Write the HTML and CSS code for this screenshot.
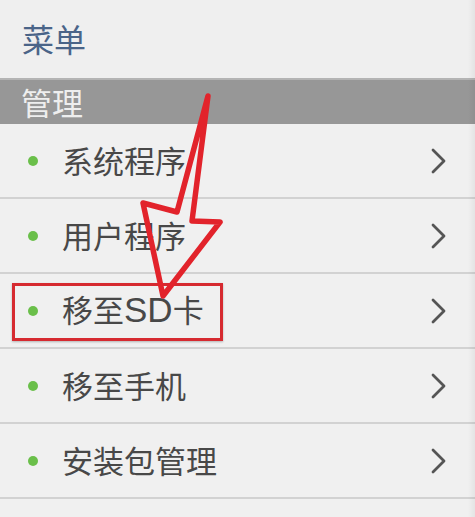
FILE: index.html
```html
<!DOCTYPE html>
<html lang="zh-CN">
<head>
<meta charset="utf-8">
<title>菜单</title>
<link rel="stylesheet" href="styles.css">
</head>
<body>
<div class="page">
  <div class="title">菜单</div>
  <div class="section">管理</div>
  <ul class="list">
    <li class="item"><span class="dot"></span><span class="label">系统程序</span><svg class="chev" viewBox="0 0 16 26"><path d="M2 2 L13 13 L2 24"/></svg></li>
    <li class="item"><span class="dot"></span><span class="label">用户程序</span><svg class="chev" viewBox="0 0 16 26"><path d="M2 2 L13 13 L2 24"/></svg></li>
    <li class="item"><span class="dot"></span><span class="label">移至<span class="latin">SD</span>卡</span><svg class="chev" viewBox="0 0 16 26"><path d="M2 2 L13 13 L2 24"/></svg></li>
    <li class="item"><span class="dot"></span><span class="label">移至手机</span><svg class="chev" viewBox="0 0 16 26"><path d="M2 2 L13 13 L2 24"/></svg></li>
    <li class="item"><span class="dot"></span><span class="label">安装包管理</span><svg class="chev" viewBox="0 0 16 26"><path d="M2 2 L13 13 L2 24"/></svg></li>
    <li class="item"></li>
  </ul>
  <div class="highlight"></div>
  <svg class="arrow" viewBox="0 0 475 517" width="475" height="517">
    <path d="M208 96 L177 212 L143 203 L163 296 L220 222 L192 221 Z"/>
  </svg>
  <div class="edge"></div>
</div>
</body>
</html>
```
FILE: styles.css
```css
* { box-sizing: border-box; }
html, body {
  margin: 0;
  padding: 0;
  width: 475px;
  height: 517px;
  overflow: hidden;
  background: #f0f0f0;
  font-family: "Noto Sans CJK SC", "Noto Sans", sans-serif;
}
.page {
  position: relative;
  width: 475px;
  height: 517px;
  overflow: hidden;
  background: #f0f0f0;
}
.title {
  height: 78px;
  padding-left: 22px;
  display: flex;
  align-items: center;
  font-size: 32px;
  color: #4a6488;
  background: #efefef;
  line-height: 1;
  padding-bottom: 2px;
}
.section {
  height: 46px;
  border-top: 2px solid #b4b4b4;
  background: #979797;
  color: #eeeeee;
  font-size: 31px;
  line-height: 1;
  padding-left: 21px;
  display: flex;
  align-items: center;
  padding-bottom: 2px;
}
.list {
  list-style: none;
  margin: 0;
  padding: 0;
}
.item {
  height: 75px;
  display: flex;
  align-items: center;
  border-bottom: 2px solid #d2d2d2;
  padding-left: 28px;
  padding-right: 28px;
  background: #f0f0f0;
}
.dot {
  width: 10px;
  height: 10px;
  border-radius: 50%;
  background: #6abf4a;
  flex: none;
}
.label {
  margin-left: 24px;
  font-size: 31px;
  line-height: 1;
  color: #484848;
  flex: 1;
  padding-bottom: 2px;
}
.latin {
  font-family: "Liberation Sans", sans-serif;
  font-size: 35px;
}
.chev {
  width: 16px;
  height: 26px;
  flex: none;
  fill: none;
  stroke: #555555;
  stroke-width: 2.8;
  stroke-linecap: round;
  stroke-linejoin: round;
}
.highlight {
  position: absolute;
  left: 12px;
  top: 283px;
  width: 211px;
  height: 58px;
  border: 3px solid #d62a30;
  box-shadow: 0 1px 2px rgba(0,0,0,0.25);
}
.arrow {
  position: absolute;
  left: 0;
  top: 0;
  fill: none;
  stroke: #e2232b;
  stroke-width: 5.5;
  stroke-linejoin: round;
  stroke-linecap: round;
}
.edge {
  position: absolute;
  right: 0;
  top: 0;
  width: 7px;
  height: 517px;
  background: linear-gradient(to right, rgba(0,0,0,0), rgba(0,0,0,0.05));
}
```
